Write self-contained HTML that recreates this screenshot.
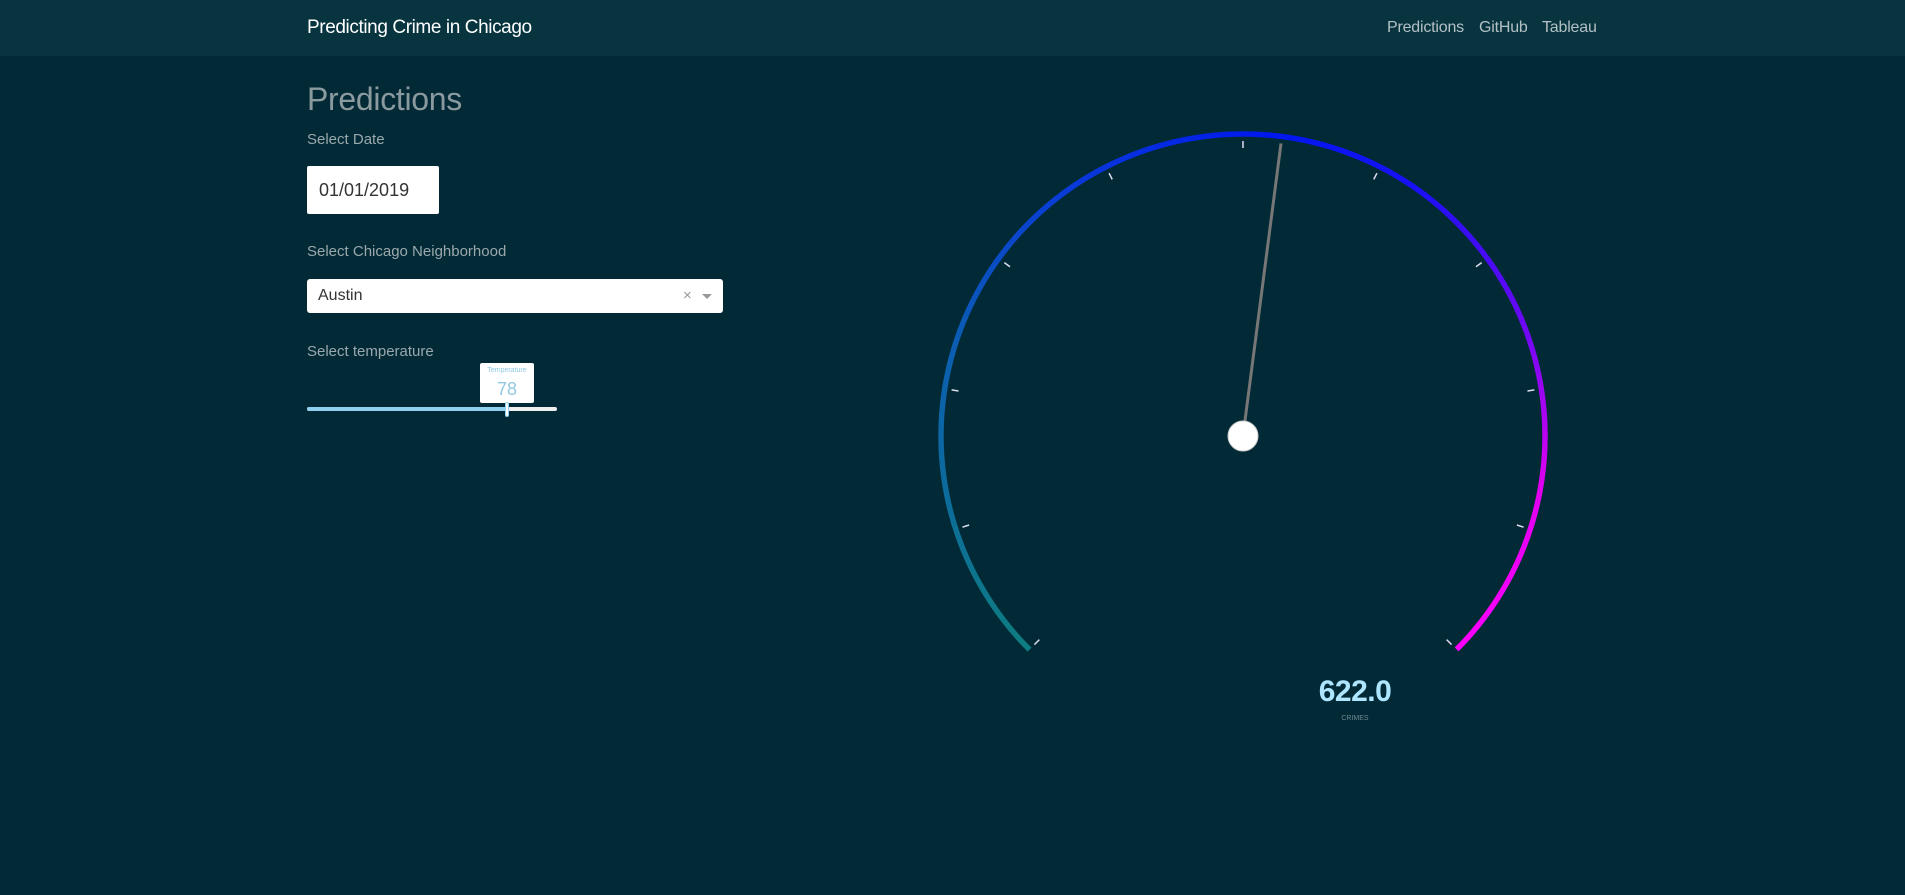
<!DOCTYPE html>
<html><head><meta charset="utf-8"><style>
*{margin:0;padding:0;box-sizing:border-box}
body{width:1905px;height:895px;background:#022a36;font-family:"Liberation Sans",sans-serif;position:relative;overflow:hidden}
.nav{position:absolute;left:0;top:0;width:1905px;height:56px;background:#07343f}
.t{position:absolute;white-space:nowrap}
.ring{position:absolute;left:938px;top:131px;width:610px;height:610px;border-radius:50%;
background:conic-gradient(from 225deg,#0e7d80 0deg,#0b5fb0 60deg,#0a3ad8 100deg,#0018ee 140deg,#1a10f5 170deg,#7008f5 205deg,#e000f0 235deg,#ff00ff 270deg,transparent 270deg);
-webkit-mask:radial-gradient(circle,transparent 299px,#000 299.5px,#000 304.5px,transparent 305px);
mask:radial-gradient(circle,transparent 299px,#000 299.5px,#000 304.5px,transparent 305px)}
</style></head><body>
<div class="nav"></div>
<div class="t" style="left:307px;top:17px;font-size:19px;letter-spacing:-0.4px;color:#fff">Predicting Crime in Chicago</div>
<div class="t" style="left:1387px;top:19px;font-size:16px;letter-spacing:-0.2px;color:#b3c0c4">Predictions</div>
<div class="t" style="left:1479px;top:19px;font-size:16px;letter-spacing:-0.2px;color:#b3c0c4">GitHub</div>
<div class="t" style="left:1542px;top:19px;font-size:16px;letter-spacing:-0.2px;color:#b3c0c4">Tableau</div>

<div class="t" style="left:307px;top:81px;font-size:32px;letter-spacing:-0.3px;color:#8a9a9e">Predictions</div>
<div class="t" style="left:307px;top:131px;font-size:15px;color:#9aa8ac">Select Date</div>
<div style="position:absolute;left:307px;top:166px;width:132px;height:48px;background:#fff;border-radius:2px"></div>
<div class="t" style="left:319px;top:180px;font-size:18px;color:#333">01/01/2019</div>
<div class="t" style="left:307px;top:243px;font-size:15px;color:#9aa8ac">Select Chicago Neighborhood</div>
<div style="position:absolute;left:307px;top:279px;width:416px;height:34px;background:#fff;border-radius:3px"></div>
<div class="t" style="left:318px;top:287px;font-size:16px;color:#333">Austin</div>
<div class="t" style="left:683px;top:287px;font-size:15px;color:#999">×</div>
<div style="position:absolute;left:702px;top:294px;width:0;height:0;border-left:5px solid transparent;border-right:5px solid transparent;border-top:5px solid #999"></div>
<div class="t" style="left:307px;top:343px;font-size:15px;color:#9aa8ac">Select temperature</div>
<div style="position:absolute;left:307px;top:407px;width:250px;height:4px;background:#eee;border-radius:2px"></div>
<div style="position:absolute;left:307px;top:407px;width:200px;height:4px;background:#8fd0ee;border-radius:2px"></div>
<div style="position:absolute;left:480px;top:363px;width:54px;height:40px;background:#fff;border-radius:2px"></div>
<div class="t" style="left:480px;top:367px;width:54px;text-align:center;font-size:7px;color:#8fc8e0">Temperature</div>
<div class="t" style="left:480px;top:379px;width:54px;text-align:center;font-size:18px;color:#8fc8e0">78</div>
<div style="position:absolute;left:505px;top:402px;width:4px;height:15px;background:#fff;border-radius:2px;border:1px solid #8fd0ee"></div>

<div class="ring"></div>
<svg width="1905" height="895" style="position:absolute;left:0;top:0">
<g stroke="#dde" stroke-width="1.5" transform="translate(1243,436)">
<line x1="0" y1="-288" x2="0" y2="-295" transform="rotate(-135)"/>
<line x1="0" y1="-288" x2="0" y2="-295" transform="rotate(-108)"/>
<line x1="0" y1="-288" x2="0" y2="-295" transform="rotate(-81)"/>
<line x1="0" y1="-288" x2="0" y2="-295" transform="rotate(-54)"/>
<line x1="0" y1="-288" x2="0" y2="-295" transform="rotate(-27)"/>
<line x1="0" y1="-288" x2="0" y2="-295" transform="rotate(0)"/>
<line x1="0" y1="-288" x2="0" y2="-295" transform="rotate(27)"/>
<line x1="0" y1="-288" x2="0" y2="-295" transform="rotate(54)"/>
<line x1="0" y1="-288" x2="0" y2="-295" transform="rotate(81)"/>
<line x1="0" y1="-288" x2="0" y2="-295" transform="rotate(108)"/>
<line x1="0" y1="-288" x2="0" y2="-295" transform="rotate(135)"/>
<line x1="0" y1="0" x2="0" y2="-295" stroke="#777" stroke-width="3" transform="rotate(7.4)"/>
</g>
<circle cx="1243" cy="436" r="15" fill="#fff" stroke="#ccc" stroke-width="1"/>
</svg>
<div class="t" style="left:1255px;top:675px;width:200px;text-align:center;font-size:30px;font-weight:bold;letter-spacing:-0.5px;color:#aee6ff">622.0</div>
<div class="t" style="left:1255px;top:715px;width:200px;text-align:center;font-size:7px;color:#6f8a92">CRIMES</div>
</body></html>
